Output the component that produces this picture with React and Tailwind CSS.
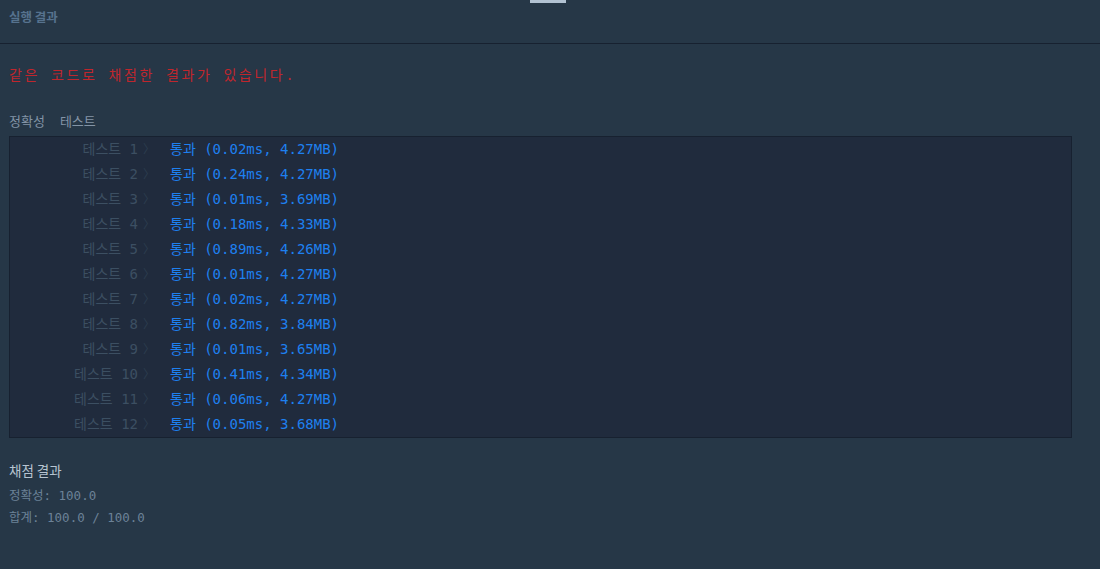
const RESULTS = [
  { n: 1, time: '0.02ms', mem: '4.27MB' },
  { n: 2, time: '0.24ms', mem: '4.27MB' },
  { n: 3, time: '0.01ms', mem: '3.69MB' },
  { n: 4, time: '0.18ms', mem: '4.33MB' },
  { n: 5, time: '0.89ms', mem: '4.26MB' },
  { n: 6, time: '0.01ms', mem: '4.27MB' },
  { n: 7, time: '0.02ms', mem: '4.27MB' },
  { n: 8, time: '0.82ms', mem: '3.84MB' },
  { n: 9, time: '0.01ms', mem: '3.65MB' },
  { n: 10, time: '0.41ms', mem: '4.34MB' },
  { n: 11, time: '0.06ms', mem: '4.27MB' },
  { n: 12, time: '0.05ms', mem: '3.68MB' },
];

const mono = "font-['DejaVu_Sans_Mono','Noto_Sans_CJK_KR',monospace]";
const sans = "font-['Noto_Sans_CJK_KR','Noto_Sans',sans-serif]";

export default function App() {
  return (
    <div className="relative w-[1100px] h-[569px] overflow-hidden bg-[#263747]">
      {/* active tab indicator */}
      <div className="absolute left-[530px] top-0 w-[36px] h-[3px] bg-[#b2c2d2]" />

      {/* Header */}
      <div className="h-[44px] border-b border-[#172130] px-[9px] pt-[4px]">
        <span className={`${sans} text-[12.5px] leading-[20px] font-bold text-[#56728e]`}>실행 결과</span>
      </div>

      <div className="px-[9px]">
        <div className={`${mono} mt-[21px] text-[14px] leading-[20px] tracking-[2.6px] text-[#c0262d]`}>
          같은 코드로 채점한 결과가 있습니다.
        </div>

        <div className={`${sans} mt-[26px] text-[13px] leading-[20px] text-[#8394a6]`}>
          <span>정확성</span>
          <span className="ml-[15px]">테스트</span>
        </div>

        {/* Result table */}
        <div className={`${mono} mt-[5px] w-[1063px] border border-[#172130] bg-[#202b3d] text-[14px]`}>
          {RESULTS.map(r => (
            <div key={r.n} className="flex items-center h-[25px]">
              <div className="w-[128px] text-right text-[#3c4f62] whitespace-pre">
                {`테스트 ${r.n}`}
              </div>
              <div className="w-[32px] pl-[5px] text-[#2c3d4f] text-[12px]">〉</div>
              <div className="text-[#1e80f0] whitespace-pre">
                {`통과 (${r.time}, ${r.mem})`}
              </div>
            </div>
          ))}
        </div>

        <div className={`${sans} mt-[22px] text-[13.5px] leading-[20px] text-[#b7c4d1]`}>채점 결과</div>
        <div className={`${mono} mt-[5px] text-[12.5px] leading-[22px] text-[#6c8297]`}>
          <div>정확성: 100.0</div>
          <div>합계: 100.0 / 100.0</div>
        </div>
      </div>
    </div>
  );
}
